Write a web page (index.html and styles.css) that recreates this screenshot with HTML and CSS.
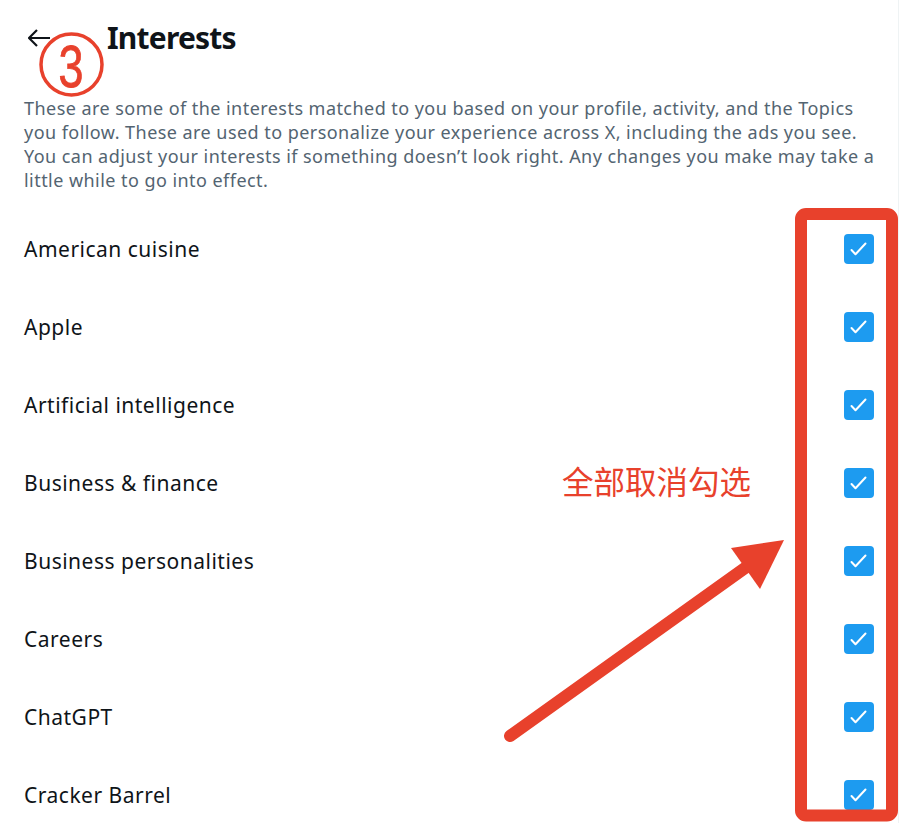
FILE: index.html
```html
<!DOCTYPE html>
<html lang="en">
<head>
<meta charset="utf-8">
<title>Interests</title>
<link rel="stylesheet" href="styles.css">
</head>
<body>
<main class="col">
  <header class="head">
    <button class="back" aria-label="Back">
      <svg viewBox="0 0 22 18" width="22" height="18"><path d="M1 9H22M9 1L1 9L9 17" fill="none" stroke="#0f1419" stroke-width="2.2"/></svg>
    </button>
    <h1 class="title">Interests</h1>
  </header>
  <p class="desc">These are some of the interests matched to you based on your profile, activity, and the Topics<br>you follow. These are used to personalize your experience across X, including the ads you see.<br>You can adjust your interests if something doesn’t look right. Any changes you make may take a<br>little while to go into effect.</p>
  <ul class="list">
    <li class="row"><span class="name">American cuisine</span><span class="cb"><svg viewBox="0 0 30 30"><path d="M7.5 16L11.5 20.2L21.5 9.5" fill="none" stroke="#fff" stroke-width="2" stroke-linecap="round" stroke-linejoin="round"/></svg></span></li>
    <li class="row"><span class="name">Apple</span><span class="cb"><svg viewBox="0 0 30 30"><path d="M7.5 16L11.5 20.2L21.5 9.5" fill="none" stroke="#fff" stroke-width="2" stroke-linecap="round" stroke-linejoin="round"/></svg></span></li>
    <li class="row"><span class="name">Artificial intelligence</span><span class="cb"><svg viewBox="0 0 30 30"><path d="M7.5 16L11.5 20.2L21.5 9.5" fill="none" stroke="#fff" stroke-width="2" stroke-linecap="round" stroke-linejoin="round"/></svg></span></li>
    <li class="row"><span class="name">Business &amp; finance</span><span class="cb"><svg viewBox="0 0 30 30"><path d="M7.5 16L11.5 20.2L21.5 9.5" fill="none" stroke="#fff" stroke-width="2" stroke-linecap="round" stroke-linejoin="round"/></svg></span></li>
    <li class="row"><span class="name">Business personalities</span><span class="cb"><svg viewBox="0 0 30 30"><path d="M7.5 16L11.5 20.2L21.5 9.5" fill="none" stroke="#fff" stroke-width="2" stroke-linecap="round" stroke-linejoin="round"/></svg></span></li>
    <li class="row"><span class="name">Careers</span><span class="cb"><svg viewBox="0 0 30 30"><path d="M7.5 16L11.5 20.2L21.5 9.5" fill="none" stroke="#fff" stroke-width="2" stroke-linecap="round" stroke-linejoin="round"/></svg></span></li>
    <li class="row"><span class="name">ChatGPT</span><span class="cb"><svg viewBox="0 0 30 30"><path d="M7.5 16L11.5 20.2L21.5 9.5" fill="none" stroke="#fff" stroke-width="2" stroke-linecap="round" stroke-linejoin="round"/></svg></span></li>
    <li class="row"><span class="name">Cracker Barrel</span><span class="cb"><svg viewBox="0 0 30 30"><path d="M7.5 16L11.5 20.2L21.5 9.5" fill="none" stroke="#fff" stroke-width="2" stroke-linecap="round" stroke-linejoin="round"/></svg></span></li>
  </ul>
</main>

<svg class="annot" viewBox="0 0 901 823" width="901" height="823" aria-hidden="true">
  <circle cx="71.5" cy="64.5" r="30.5" fill="none" stroke="#e8412c" stroke-width="3.5"/>
  <text x="58.5" y="86.5" font-family="Liberation Sans, Arial, sans-serif" font-size="59" fill="#e8412c" stroke="#e8412c" stroke-width="0.8" textLength="25" lengthAdjust="spacingAndGlyphs">3</text>
  <rect x="801" y="214" width="91" height="601.5" rx="5" ry="5" fill="none" stroke="#e8412c" stroke-width="12"/>
  <line x1="510" y1="736" x2="752" y2="563" stroke="#e8412c" stroke-width="12" stroke-linecap="round"/>
  <polygon points="784,540 731,548 760,589" fill="#e8412c"/>
</svg>
<div class="note">全部取消勾选</div>
</body>
</html>
```

FILE: styles.css
```css
html, body {
  margin: 0;
  padding: 0;
  background: #fff;
}
body {
  position: relative;
  width: 901px;
  min-height: 823px;
  overflow: hidden;
  font-family: "Noto Sans", "Open Sans", "Liberation Sans", sans-serif;
  color: #0f1419;
}
.col {
  width: 850px;
  padding: 0 24px;
  border-right: 1px solid #eff3f4;
  min-height: 900px;
}
.head {
  display: flex;
  align-items: center;
  height: 76px;
}
.back {
  display: flex;
  align-items: center;
  justify-content: center;
  width: 22px;
  height: 22px;
  margin-left: 4px;
  padding: 0;
  border: 0;
  background: none;
}
.back svg {
  display: block;
}
.title {
  margin: 0 0 0 57px;
  font-size: 30px;
  line-height: 36px;
  font-weight: 700;
  letter-spacing: -0.8px;
}
.desc {
  margin: 20px 0 0;
  font-size: 18px;
  line-height: 24px;
  letter-spacing: 0.45px;
  color: #536471;
  white-space: nowrap;
}
.list {
  list-style: none;
  margin: 18px 0 0;
  padding: 0;
}
.row {
  display: flex;
  align-items: center;
  justify-content: space-between;
  height: 78px;
}
.name {
  font-size: 21px;
  line-height: 28px;
  letter-spacing: 0.5px;
}
.cb {
  display: block;
  width: 30px;
  height: 30px;
  border-radius: 4px;
  background: #1d9bf0;
}
.cb svg {
  display: block;
  width: 30px;
  height: 30px;
}
.annot {
  position: absolute;
  left: 0;
  top: 0;
  pointer-events: none;
}
.note {
  position: absolute;
  left: 562px;
  top: 462px;
  font-family: "Noto Sans CJK SC", sans-serif;
  font-size: 31.5px;
  line-height: 36px;
  color: #e8412c;
  white-space: nowrap;
}
```
